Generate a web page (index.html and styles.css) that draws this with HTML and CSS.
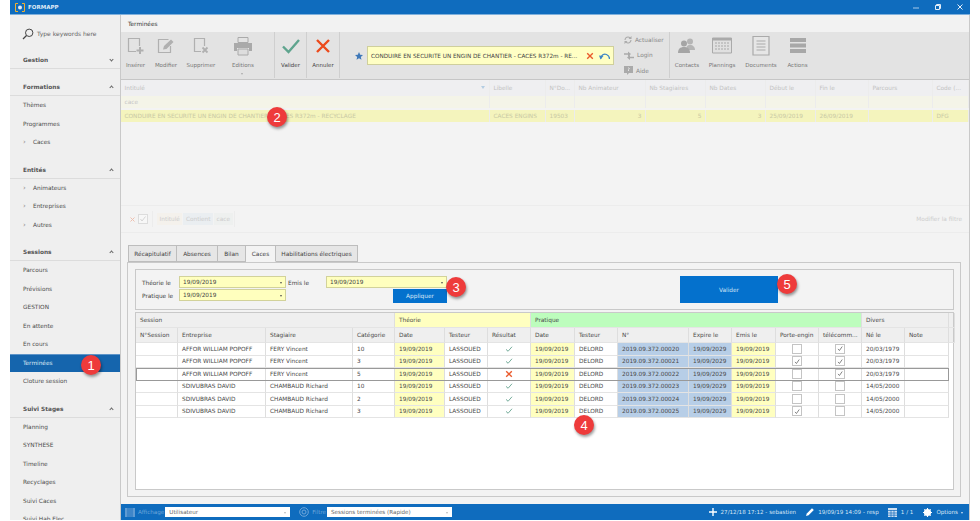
FILE: index.html
```html
<!DOCTYPE html>
<html lang="fr">
<head>
<meta charset="utf-8">
<title>FORMAPP</title>
<link rel="stylesheet" href="styles.css">
</head>
<body>
<svg class="defs" width="0" height="0">
  <symbol id="ok" viewBox="0 0 10 8"><path d="M1 4.500 3.800 7 9 1" fill="none" stroke="#72ab98" stroke-width="1.300"/></symbol>
  <symbol id="ko" viewBox="0 0 10 10"><path d="M1.500 1.500 8.500 8.500M8.500 1.500 1.500 8.500" fill="none" stroke="#ea5a2c" stroke-width="1.700"/></symbol>
  <symbol id="tick" viewBox="0 0 10 10"><path d="M2.500 5.500 4.300 7.500 7.800 2.500" fill="none" stroke="#555" stroke-width=".9"/></symbol>
</svg>
<div class="app">
  <header class="titlebar">
    <svg class="logo" width="10" height="9" viewBox="0 0 10 9"><path d="M3 .5H.5v8H3M7 .5h2.500v8H7" fill="none" stroke="#f0b030"/><circle cx="5" cy="4.500" r="2" fill="#dfe9f5"/></svg>
    <span class="apptitle">FORMAPP</span>
    <span class="winbtns">
      <svg width="6" height="6" viewBox="0 0 6 6"><path d="M0 4h6" stroke="#a8c8e8"/></svg>
      <svg width="6" height="6" viewBox="0 0 6 6"><path d="M.5 1.500h4v4h-4zM1.500 1.500V.5h4v4h-1" fill="none" stroke="#e4eef8"/></svg>
      <svg width="6" height="6" viewBox="0 0 6 6"><path d="m.5.500 5 5m0-5-5 5" stroke="#e4eef8"/></svg>
    </span>
  </header>
  <div class="body">
    <nav class="sidebar">
      <div class="search">
        <svg width="12" height="12" viewBox="0 0 12 12"><circle cx="7.200" cy="4.800" r="3.700" fill="none" stroke="#444"/><path d="M4.500 7.500 1 11" stroke="#444" stroke-width="1.200"/></svg>
        <span>Type keywords here</span>
      </div>
      <div class="navhead">Gestion<i class="chev down"></i></div>
      <div class="navgap"></div>
      <div class="navhead">Formations<i class="chev"></i></div>
      <div class="navitem">Thèmes</div>
      <div class="navitem">Programmes</div>
      <div class="navitem sub">Caces</div>
      <div class="navgap"></div>
      <div class="navhead">Entités<i class="chev"></i></div>
      <div class="navitem sub">Animateurs</div>
      <div class="navitem sub">Entreprises</div>
      <div class="navitem sub">Autres</div>
      <div class="navgap"></div>
      <div class="navhead">Sessions<i class="chev"></i></div>
      <div class="navitem">Parcours</div>
      <div class="navitem">Prévisions</div>
      <div class="navitem">GESTION</div>
      <div class="navitem">En attente</div>
      <div class="navitem">En cours</div>
      <div class="navitem active">Terminées</div>
      <div class="navitem">Cloture session</div>
      <div class="navgap"></div>
      <div class="navhead">Suivi Stages<i class="chev"></i></div>
      <div class="navitem">Planning</div>
      <div class="navitem">SYNTHESE</div>
      <div class="navitem">Timeline</div>
      <div class="navitem">Recyclages</div>
      <div class="navitem">Suivi Caces</div>
      <div class="navitem">Suivi Hab.Elec.</div>
    </nav>
    <main class="main">
      <div class="crumb">Terminées</div>
      <div class="toolbar">
        <div class="tool w29"><svg width="18" height="18" viewBox="0 0 18 18"><path d="M9 14.500H1.500v-13h11V9" fill="none" stroke="#b0b0b0" stroke-width="1.200"/><path d="M13 10v7M9.500 13.500h7" stroke="#b0b0b0" stroke-width="2"/></svg><span>Insérer</span></div>
        <div class="tool w32"><svg width="18" height="18" viewBox="0 0 18 18"><path d="M13.500 9v6.500h-12v-13h10" fill="none" stroke="#b0b0b0" stroke-width="1.200"/><path d="M6 12.500l1-3.500 7-6.500 2.500 2.500-7 7z" fill="#b0b0b0"/></svg><span>Modifier</span></div>
        <div class="tool w38"><svg width="18" height="18" viewBox="0 0 18 18"><path d="M9 14.500H2.500v-13h10V9" fill="none" stroke="#b0b0b0" stroke-width="1.200"/><path d="m10.500 10.500 5 5m0-5-5 5" stroke="#b0b0b0" stroke-width="1.800"/></svg><span>Supprimer</span></div>
        <div class="tool w46"><svg width="18" height="18" viewBox="0 0 18 18"><path d="M4 .5h10v5H4z" fill="none" stroke="#aaa"/><path d="M0 6h18v8h-3v-3H3v3H0z" fill="#aaa"/><path d="M4 12h10v6H4z" fill="#ddd" stroke="#aaa"/></svg><span>Editions</span><i class="caret"></i></div>
        <div class="toolsep sep8"></div>
        <div class="tool w31"><svg width="18" height="18" viewBox="0 0 18 18"><path d="M1 9.500 6.500 15 17 3" fill="none" stroke="#5fa48e" stroke-width="2.400"/></svg><span class="dark">Valider</span></div>
        <div class="toolsep"></div>
        <div class="tool w32"><svg width="18" height="18" viewBox="0 0 18 18"><path d="m3 3 12 12m0-12L3 15" stroke="#ec4a1c" stroke-width="2.400"/></svg><span class="dark">Annuler</span></div>
        <div class="toolsep"></div>
        <svg class="star" width="8" height="8" viewBox="0 0 10 10"><path d="m5 0 1.500 3.400 3.500.3-2.700 2.400.8 3.600L5 7.800l-3.100 1.900.8-3.600L0 3.700l3.500-.3z" fill="#3f78b8"/></svg>
        <div class="selbox">
          <span class="seltext">CONDUIRE EN SECURITE UN ENGIN DE CHANTIER - CACES R372m - RE...</span>
          <svg width="8" height="8"><use href="#ko"/></svg>
          <svg class="undo" width="11" height="8" viewBox="0 0 11 8"><path d="M2 6.500C2 3 5 1.500 7.500 2.500S10.500 5 10.500 7" fill="none" stroke="#3f86c4" stroke-width="1.300"/><path d="M0 3.500l4.500.5-3 3.500z" fill="#3f86c4"/></svg>
        </div>
        <div class="minitools">
          <div class="mini"><svg width="8" height="8" viewBox="0 0 8 8"><path d="M1 4a3 3 0 0 1 5-2.200M7 4a3 3 0 0 1-5 2.200" fill="none" stroke="#aaa" stroke-width="1.100"/><path d="M7.500 0v3h-3zM.5 8V5h3z" fill="#aaa"/></svg><span>Actualiser</span></div>
          <div class="mini"><svg width="10" height="9" viewBox="0 0 10 9"><path d="M0 3h5M5 6.500h5" stroke="#aaa" stroke-width="1.400"/><path d="M4 .5 7 3 4 5.500zM6 4 3 6.500 6 9z" fill="#aaa"/></svg><span>Login</span></div>
          <div class="mini"><svg width="9" height="9" viewBox="0 0 9 9"><path d="M0 0h9v7H5L3 9V7H0z" fill="#aaa"/><path d="M4.500 5V3.500c1.500-.5 1-2-.5-1.500" fill="none" stroke="#e3e3e3"/></svg><span>Aide</span></div>
        </div>
        <div class="toolsep"></div>
        <div class="tool w34"><svg width="18" height="18" viewBox="0 0 18 18"><circle cx="12" cy="4.500" r="3" fill="#b5b5b5"/><path d="M8 13c0-3 1-5 4-5s5 2 5 5z" fill="#b5b5b5"/><circle cx="6" cy="6.500" r="3" fill="#a5a5a5"/><path d="M0 16c0-4 2-6 6-6s6 2 6 6z" fill="#a5a5a5"/></svg><span>Contacts</span></div>
        <div class="tool w36"><svg width="20" height="18" viewBox="0 0 20 18"><path d="M.5 1h19v15H.5z" fill="#e0e0e0" stroke="#aaa"/><path d="M1 1h18v2.500H1z" fill="#aaa"/><path d="M3 6h14M3 9h14M3 12h14" stroke="#bbb" stroke-width="1.500" stroke-dasharray="2 1"/></svg><span>Plannings</span></div>
        <div class="tool w42"><svg width="18" height="20" viewBox="0 0 18 20"><path d="M1 .5h16v18.500H1z" fill="#e6e6e6" stroke="#aaa" stroke-width="1.200"/><path d="M4.500 5h9M4.500 8h9M4.500 11h9M4.500 14h9" stroke="#aaa"/></svg><span>Documents</span></div>
        <div class="tool w31"><svg width="16" height="16" viewBox="0 0 16 16"><path d="M0 0h16v4H0zM0 5.500h16v4H0zM0 11h16v4H0z" fill="#a8a8a8"/></svg><span>Actions</span></div>
      </div>
      <div class="master">
        <div class="mrow mhead">
          <div class="mfunnel">Intitulé<i class="funnel"></i></div><div>Libelle</div><div>N°Do...</div><div>Nb Animateur</div><div>Nb Stagiaires</div><div>Nb Dates</div><div>Début le</div><div>Fin le</div><div>Parcours</div><div>Code (...</div>
        </div>
        <div class="mrow mfilter"><div>cace</div><div></div><div></div><div></div><div></div><div></div><div></div><div></div><div></div><div></div></div>
        <div class="mrow mdata">
          <div>CONDUIRE EN SECURITE UN ENGIN DE CHANTIER - CACES R372m - RECYCLAGE</div><div>CACES ENGINS</div><div>19503</div><div class="num">3</div><div class="num">5</div><div class="num">3</div><div>25/09/2019</div><div>26/09/2019</div><div></div><div>DFG</div>
        </div>
        <div class="filterbar">
          <svg width="5" height="5" viewBox="0 0 5 5"><path d="m.5.500 4 4m0-4-4 4" stroke="#eec0b0"/></svg>
          <span class="fcheck"><svg width="8" height="8" viewBox="0 0 8 8"><path d="M1.500 4 3 6l3.500-4.500" fill="none" stroke="#ccc" stroke-width=".8"/></svg></span>
          <span class="fgroup"><b class="chip c1">Intitulé</b><b class="chip c2">Contient</b><b class="chip c3">cace</b></span>
          <span class="fedit">Modifier la filtre</span>
        </div>
      </div>
      <div class="tabs">
        <div class="tab">Récapitulatif</div><div class="tab t2">Absences</div><div class="tab t3">Bilan</div><div class="tab on">Caces</div><div class="tab t5">Habilitations électriques</div>
      </div>
      <div class="panel">
        <div class="form">
          <label>Théorie le</label><div class="date">19/09/2019<i></i></div>
          <label class="lb2">Emis le</label><div class="date">19/09/2019<i></i></div>
          <div class="bigbtn">Valider</div>
          <label class="row2">Pratique le</label><div class="date row2">19/09/2019<i></i></div>
          <div class="apply">Appliquer</div>
        </div>
        <div class="sheet">
          <div class="grow ghead">
            <div class="s4">Session</div><div class="s3 yel">Théorie</div><div class="s7 grn">Pratique</div><div class="s2">Divers</div><div></div>
          </div>
          <div class="grow chead">
            <div>N°Session</div><div>Entreprise</div><div>Stagiaire</div><div>Catégorie</div><div>Date</div><div>Testeur</div><div>Résultat</div><div>Date</div><div>Testeur</div><div>N°</div><div>Expire le</div><div>Emis le</div><div>Porte-engin</div><div>télécomm...</div><div>Né le</div><div>Note</div><div></div>
          </div>
          <div class="grow rw">
            <div></div><div>AFFOR WILLIAM POPOFF</div><div>FERY Vincent</div><div>10</div><div class="yel">19/09/2019</div><div>LASSOUED</div><div class="ctr"><svg width="8" height="6"><use href="#ok"/></svg></div><div class="yel">19/09/2019</div><div>DELORD</div><div class="blu">2019.09.372.00020</div><div class="blu">19/09/2029</div><div class="yel">19/09/2019</div><div class="ctr"><span class="cb"></span></div><div class="ctr"><span class="cb"><svg width="9" height="9"><use href="#tick"/></svg></span></div><div>20/03/1979</div><div></div>
          </div>
          <div class="grow rw">
            <div></div><div>AFFOR WILLIAM POPOFF</div><div>FERY Vincent</div><div>3</div><div class="yel">19/09/2019</div><div>LASSOUED</div><div class="ctr"><svg width="8" height="6"><use href="#ok"/></svg></div><div class="yel">19/09/2019</div><div>DELORD</div><div class="blu">2019.09.372.00021</div><div class="blu">19/09/2029</div><div class="yel">19/09/2019</div><div class="ctr"><span class="cb"><svg width="9" height="9"><use href="#tick"/></svg></span></div><div class="ctr"><span class="cb"><svg width="9" height="9"><use href="#tick"/></svg></span></div><div>20/03/1979</div><div></div>
          </div>
          <div class="grow rw sel">
            <div></div><div>AFFOR WILLIAM POPOFF</div><div>FERY Vincent</div><div>5</div><div class="yel">19/09/2019</div><div>LASSOUED</div><div class="ctr"><svg width="8" height="8"><use href="#ko"/></svg></div><div class="yel">19/09/2019</div><div>DELORD</div><div class="blu">2019.09.372.00022</div><div class="blu">19/09/2029</div><div class="yel">19/09/2019</div><div class="ctr"><span class="cb"></span></div><div class="ctr"><span class="cb"><svg width="9" height="9"><use href="#tick"/></svg></span></div><div>20/03/1979</div><div></div>
          </div>
          <div class="grow rw">
            <div></div><div>SDIVUBRAS DAVID</div><div>CHAMBAUD Richard</div><div>10</div><div class="yel">19/09/2019</div><div>LASSOUED</div><div class="ctr"><svg width="8" height="6"><use href="#ok"/></svg></div><div class="yel">19/09/2019</div><div>DELORD</div><div class="blu">2019.09.372.00023</div><div class="blu">19/09/2029</div><div class="yel">19/09/2019</div><div class="ctr"><span class="cb"></span></div><div class="ctr"><span class="cb"></span></div><div>14/05/2000</div><div></div>
          </div>
          <div class="grow rw">
            <div></div><div>SDIVUBRAS DAVID</div><div>CHAMBAUD Richard</div><div>2</div><div class="yel">19/09/2019</div><div>LASSOUED</div><div class="ctr"><svg width="8" height="6"><use href="#ok"/></svg></div><div class="yel">19/09/2019</div><div>DELORD</div><div class="blu">2019.09.372.00024</div><div class="blu">19/09/2029</div><div class="yel">19/09/2019</div><div class="ctr"><span class="cb"></span></div><div class="ctr"><span class="cb"></span></div><div>14/05/2000</div><div></div>
          </div>
          <div class="grow rw">
            <div></div><div>SDIVUBRAS DAVID</div><div>CHAMBAUD Richard</div><div>3</div><div class="yel">19/09/2019</div><div>LASSOUED</div><div class="ctr"><svg width="8" height="6"><use href="#ok"/></svg></div><div class="yel">19/09/2019</div><div>DELORD</div><div class="blu">2019.09.372.00025</div><div class="blu">19/09/2029</div><div class="yel">19/09/2019</div><div class="ctr"><span class="cb"><svg width="9" height="9"><use href="#tick"/></svg></span></div><div class="ctr"><span class="cb"></span></div><div>14/05/2000</div><div></div>
          </div>
        </div>
      </div>
      <footer class="status">
        <svg width="10" height="9" viewBox="0 0 10 9"><path d="M0 0h10v9H0z" fill="#5f9bd3"/><path d="M3 0v9M5 0v9M7 0v9" stroke="#1068bb" stroke-width=".8"/></svg>
        <span class="dim st1">Affichage</span>
        <div class="combo">Utilisateur<i></i></div>
        <svg class="st2" width="10" height="10" viewBox="0 0 10 10"><circle cx="5" cy="5" r="4.300" fill="none" stroke="#6ea6da"/><circle cx="5" cy="5" r="2" fill="none" stroke="#6ea6da"/></svg>
        <span class="dim st1">Filtre</span>
        <div class="combo">Sessions terminées (Rapide)<i></i></div>
        <span class="spring"></span>
        <svg width="8" height="8" viewBox="0 0 8 8"><path d="M4 0v8M0 4h8" stroke="#fff" stroke-width="1.400"/></svg>
        <span class="info">27/12/18 17:12 - sebastien</span>
        <svg class="st3" width="8" height="8" viewBox="0 0 8 8"><path d="M0 8l.8-2.600L6 .2 7.800 2 2.600 7.200z" fill="#fff"/></svg>
        <span class="info">19/09/19 14:09 - resp</span>
        <svg class="st4" width="9" height="9" viewBox="0 0 9 9"><path d="M0 0h9v9H0z" fill="#cfe0f2"/><path d="M0 2.500h9M0 5h9M0 7.200h9M3 2v7M6 2v7" stroke="#1068bb" stroke-width=".7"/></svg>
        <span class="info">1 / 1</span>
        <svg class="st5" width="9" height="9" viewBox="0 0 9 9"><circle cx="4.500" cy="4.500" r="2.700" fill="none" stroke="#fff" stroke-width="1.800"/><path d="M4.500 0v9M0 4.500h9M1.300 1.300l6.400 6.400M7.700 1.300 1.300 7.700" stroke="#fff" stroke-width="1.100"/></svg>
        <span class="info">Options</span><i class="optcaret"></i>
      </footer>
    </main>
  </div>
  <div class="badge b1">1</div>
  <div class="badge b2">2</div>
  <div class="badge b3">3</div>
  <div class="badge b4">4</div>
  <div class="badge b5">5</div>
</div>
</body>
</html>
```

FILE: styles.css
```css
* { box-sizing: border-box; }
html, body { margin: 0; padding: 0; background: #fff; }
body { font-family: "DejaVu Sans", Tahoma, sans-serif; font-size: 5.800px; color: #4a4a4a; overflow: hidden; }
.defs { position: absolute; }
.app { position: relative; width: 980px; height: 520px; padding: 0 10px; overflow: hidden; display: flex; flex-direction: column; }

.titlebar { height: 15px; flex: none; background: #0f6cbe; border-bottom: 1px solid #7fb0dc; display: flex; align-items: center; padding-left: 5px; gap: 3px; color: #dfeaf6; }
.apptitle { font-weight: 700; font-size: 5.500px; }
.winbtns { margin-left: auto; display: flex; gap: 16px; padding-right: 7px; align-items: center; }

.body { flex: 1; display: flex; min-height: 0; }

.sidebar { width: 111px; flex: none; background: #efefef; border-right: 1px solid #c9c9c9; overflow: hidden; }
.search { height: 37px; display: flex; align-items: center; gap: 3px; padding: 0 0 0 12px; color: #666; font-size: 6px; }
.navhead { height: 17px; padding: 0 7px 0 13px; border-bottom: 1px solid #dcdcdc; font-weight: 700; color: #555; display: flex; justify-content: space-between; align-items: center; }
.chev { width: 3px; height: 3px; border-left: 1px solid #666; border-top: 1px solid #666; transform: rotate(45deg); margin-top: 1px; }
.chev.down { transform: rotate(225deg); margin-top: -1px; }
.navgap { height: 10px; }
.navitem { height: 18.500px; padding-left: 13px; display: flex; align-items: center; color: #4d4d4d; }
.navitem.sub { padding-left: 23px; position: relative; }
.navitem.sub::before { content: "›"; position: absolute; left: 13px; color: #888; font-size: 7px; }
.navitem.active { background: #1565ad; color: #dfe9f4; border-top: 1px solid #5e94c8; }

.main { flex: 1; min-width: 0; display: flex; flex-direction: column; background: #f3f3f3; border-right: 1px solid #c9c9c9; }
.crumb { height: 17px; flex: none; padding: 0 0 0 7px; display: flex; align-items: center; background: #f2f2f2; color: #333; }

.toolbar { height: 48px; flex: none; background: #e3e3e3; border-bottom: 1px solid #c6c6c6; display: flex; align-items: flex-start; }
.tool { height: 47px; flex: none; display: flex; flex-direction: column; align-items: center; padding-top: 2px; position: relative; color: #777; font-size: 5.500px; }
.tool svg { height: 24px; flex: none; }
.tool span { line-height: 8px; margin-top: 3px; white-space: nowrap; }
.tool span.dark { color: #444; }
.w29 { width: 29px; } .w31 { width: 31px; } .w32 { width: 32px; } .w34 { width: 34px; } .w36 { width: 36px; } .w38 { width: 38px; } .w42 { width: 42px; } .w46 { width: 46px; }
.caret { position: absolute; left: 21px; top: 41px; border: 1.500px solid transparent; border-top: 2px solid #aaa; }
.toolsep { width: 1px; height: 46px; flex: none; background: #cfcfcf; }
.sep8 { margin-left: 8px; }
.star { margin: 20px 4px 0 15px; flex: none; }
.selbox { width: 247px; height: 19px; flex: none; margin-top: 14px; background: #ffffc4; border: 1px solid #cfcf9c; display: flex; align-items: center; padding: 0 3px; gap: 5px; color: #444; font-size: 5.700px; }
.seltext { flex: 1; white-space: nowrap; overflow: hidden; }
.minitools { width: 55px; flex: none; padding-left: 10px; display: flex; flex-direction: column; color: #888; }
.mini { height: 15.500px; display: flex; align-items: center; gap: 3px; }

.master { height: 158px; flex: none; position: relative; }
.mrow { display: grid; grid-template-columns: 369px 56px 29px 71px 60px 60px 50px 53px 64px 36px; }
.mrow > div { padding: 0 3.500px; white-space: nowrap; overflow: hidden; display: flex; align-items: center; border-right: 1px solid #ececec; }
.mhead { height: 16px; background: #efeff1; color: #c2c2c2; }
.mfilter { height: 12px; background: #f4f4e8; color: #c6c6c6; margin-bottom: 2px; }
.mdata { height: 12px; background: #f4f4bd; color: #c9c9a4; }
.mdata .num { justify-content: flex-end; }
.mfunnel { position: relative; }
.funnel { position: absolute; right: 4px; top: 6px; border: 2px solid transparent; border-top: 3px solid #b4cde2; }
.filterbar { margin-top: 83px; height: 28px; border-top: 1px solid #ececec; border-bottom: 1px solid #ececec; display: flex; align-items: center; padding-left: 9px; gap: 3px; color: #cdcdcd; }
.fcheck { width: 10px; height: 10px; border: 1px solid #dcdcdc; background: #f7f7f7; display: flex; align-items: center; justify-content: center; margin-right: 1px; }
.fgroup { display: flex; gap: 1px; height: 16px; padding: 2px 1px 2px 4px; border: 1px solid #ececec; border-width: 0 1px; }
.chip { font-weight: 400; padding: 0 2.500px; display: flex; align-items: center; }
.c1 { background: #f4f1ec; } .c2 { background: #eaeef1; } .c3 { background: #eef0ef; }
.fedit { margin-left: auto; padding-right: 7px; }

.tabs { height: 17px; flex: none; margin: 7px 0 0 7px; display: flex; position: relative; z-index: 1; }
.tab { width: 49px; height: 17px; background: #e6e6e6; border: 1px solid #bdbdbd; border-left-width: 0; display: flex; align-items: center; justify-content: center; color: #444; }
.tab:first-child { border-left-width: 1px; }
.t2 { width: 41px; } .t3 { width: 28px; } .t5 { width: 82px; }
.tab.on { width: 30px; background: #f3f3f3; border-bottom-color: #f3f3f3; }

.panel { height: 235px; flex: none; margin: 0 8px 0 6px; border: 1px solid #c9c9c9; padding: 6px 6px 0 7px; display: flex; flex-direction: column; gap: 2px; background: #f3f3f3; }
.form { height: 41px; flex: none; border: 1px solid #c9c9c9; display: grid; grid-template-columns: 37px 107px 40px 121px 233px 98px; grid-template-rows: 13px 14px; align-content: start; padding: 6px 0 0 6px; }
.form label { display: flex; align-items: center; color: #444; white-space: nowrap; }
.form label.lb2 { padding-left: 2px; }
.row2 { grid-row: 2; }
.date { background: #ffffbe; border: 1px solid #d2d29a; height: 12px; display: flex; align-items: center; justify-content: space-between; padding: 0 3px; color: #444; }
.date i { border: 1.500px solid transparent; border-top: 2px solid #555; margin-top: 2px; }
.bigbtn { grid-row: 1 / span 2; grid-column: 6; background: #0471cd; color: #cfe3f6; display: flex; align-items: center; justify-content: center; }
.apply { grid-row: 2; grid-column: 4; justify-self: end; width: 54px; height: 14px; background: #0471cd; color: #d9e9f8; display: flex; align-items: center; justify-content: center; }

.sheet { height: 178px; flex: none; border: 1px solid #c9c9c9; background: #fff; }
.grow { display: grid; grid-template-columns: 42px 88px 87px 42px 50px 43px 43px 44px 43px 71px 43px 44px 43px 43px 43px 44px 6px; }
.grow > div { padding-left: 4px; display: flex; align-items: center; white-space: nowrap; overflow: hidden; border-right: 1px solid #dedede; border-bottom: 1px solid #e4e4e4; }
.ghead { height: 15px; background: #efefef; }
.chead { height: 15px; background: #efefef; }
.s4 { grid-column: span 4; } .s3 { grid-column: span 3; } .s7 { grid-column: span 7; } .s2 { grid-column: span 2; }
.rw { height: 12.500px; width: 813px; color: #4a4a4a; }
.rw.sel { outline: 1px solid #999; outline-offset: -1px; }
.yel { background: #ffffc0; }
.grn { background: #bdfdbd; }
.blu { background: #b7cee7; }
.grow > .ctr { justify-content: center; padding-left: 0; }
.cb { width: 10px; height: 10px; border: 1px solid #c4c4c4; background: #fff; display: flex; align-items: center; justify-content: center; }

.status { flex: none; height: 16px; margin-top: 7px; background: #0f6cbe; display: flex; align-items: center; padding: 0 6px 0 4px; color: #d7e6f5; font-size: 5.600px; }
.dim { color: #6ea6da; }
.st1 { margin: 0 1px 0 3px; }
.st2 { margin-left: 9px; }
.st3 { margin-left: 10px; }
.st4 { margin-left: 9px; }
.st5 { margin-left: 10px; }
.combo { width: 125px; height: 10px; background: #fff; color: #666; display: flex; align-items: center; justify-content: space-between; padding: 0 4px; }
.combo i { border: 1.500px solid transparent; border-top: 2px solid #bbb; margin-top: 2px; }
.spring { flex: 1; }
.info { margin-left: 4px; white-space: nowrap; }
.optcaret { border: 1.500px solid transparent; border-top: 2px solid #cfe0f2; margin: 2px 0 0 3px; }

.badge { position: absolute; width: 20px; height: 20px; border-radius: 50%; background: #ee3b3b; color: #fff; font-family: "Liberation Sans", Arial, sans-serif; font-size: 13px; display: flex; align-items: center; justify-content: center; box-shadow: 1px 2px 3px rgba(0,0,0,.4); }
.b1 { left: 81px; top: 355px; }
.b2 { left: 267px; top: 107px; }
.b3 { left: 446px; top: 277px; }
.b4 { left: 574px; top: 415px; }
.b5 { left: 777px; top: 274px; }
```
